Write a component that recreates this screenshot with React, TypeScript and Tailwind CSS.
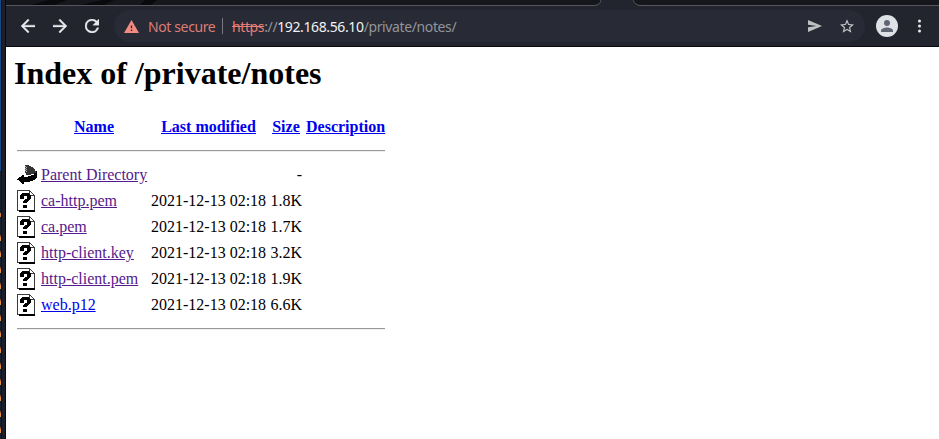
import React from "react";

const files = [
  { name: "ca-http.pem", size: "1.8K", visited: true },
  { name: "ca.pem", size: "1.7K", visited: true },
  { name: "http-client.key", size: "3.2K", visited: true },
  { name: "http-client.pem", size: "1.9K", visited: true },
  { name: "web.p12", size: "6.6K", visited: false },
];

const glowRows = Array.from({ length: 13 }, (_, i) => i);

function UnknownIcon() {
  return (
    <svg width="20" height="22" viewBox="0 0 20 22" shapeRendering="crispEdges" className="shrink-0">
      <path d="M0 0h13v1h1v1h1v1h1v1h1v1h1v16H0z" fill="#3c3c3c" />
      <path d="M1 1h11v5h5v14H1z" fill="#fff" />
      <path d="M13 2h1v1h1v1h1v1h-3z" fill="#fff" />
      <path d="M2 20h16v2H2z" fill="#000" />
      <path d="M5 3h7v1h1v1h1v4h-1v1h-1v1h-1v1h-1v1H6v-2h1v-1h1V9h2V6H7v3H3V5h1V4h1z M6 15h4v3H6z" fill="#000" />
    </svg>
  );
}

function BackIcon() {
  return (
    <svg width="20" height="22" viewBox="0 0 20 22" shapeRendering="crispEdges" className="shrink-0">
      <path d="M8 1h4v1h2v1h2v1h1v1h1v2h1v3h-5v1H9V9H8z" fill="#333" />
      <path d="M8 2h1v1H8zm0 2h1v1H8zm0 2h1v1H8zm1-3h1v1H9zm0 2h1v1H9zm0 2h1v1H9z" fill="#bbb" />
      <path d="M19 7h1v7h-1v1h-1v1h-2v1h-3v1H7v2H5v-1H4v-1H3v-1H2v-1H0v-1h1v-1h1v-1h2v-1h1v-1h2v2h4v-1h3v-1h3V9h2z" fill="#000" />
    </svg>
  );
}

function Toolbar() {
  return (
    <div className="relative h-[47px] bg-[#23252e] font-['Noto_Sans',sans-serif] text-[14px] tracking-[-0.38px]">
      <svg className="absolute left-0 top-0" width="933" height="7" fill="none">
        <path d="M0 0h596Q594 5 588 5H0z" fill="#16171c" />
        <path d="M25 5 43 0h18L48 5zM75 5 96 0h12L98 5zM134 5l5-5h12l-6 5z" fill="#090a0d" />
        <path d="M626 0Q629 5 635 5h298V0z" fill="#16171c" />
        <path d="M0 5.5h588q6 0 7-5.5M627 0q2 5.5 8 5.5h298" stroke="#55575b" />
      </svg>
      <div className="flex h-[47px] items-center border-b border-[#08090c] pt-[6px] text-[#e8eaed]">
        <svg className="ml-[15px] shrink-0" width="14" height="14" viewBox="4 4 16 16" fill="currentColor" stroke="currentColor" strokeWidth="0.4"><path d="M20 11H7.8l5.6-5.6L12 4l-8 8 8 8 1.4-1.4L7.8 13H20z" /></svg>
        <svg className="ml-[18px] shrink-0" width="14" height="14" viewBox="4 4 16 16" fill="currentColor" stroke="currentColor" strokeWidth="0.4"><path d="m12 4-1.4 1.4 5.6 5.6H4v2h12.2l-5.6 5.6L12 20l8-8z" /></svg>
        <svg className="ml-[18px] shrink-0" width="14" height="14" viewBox="4 4 16 16" fill="currentColor" stroke="currentColor" strokeWidth="0.4"><path d="M17.65 6.35A7.96 7.96 0 0 0 12 4a8 8 0 1 0 7.73 10h-2.08A6 6 0 1 1 12 6c1.66 0 3.14.69 4.22 1.78L13 11h7V4z" /></svg>
        <div className="ml-[15px] flex h-8 w-[751px] shrink-0 items-center rounded-full bg-[#282a35]">
          <svg className="ml-[10px] shrink-0" width="15" height="13" viewBox="1 2 22 19" fill="#f28b82"><path d="M1 21h22L12 2zm12-3h-2v-2h2zm0-4h-2v-4h2z" /></svg>
          <span className="ml-[9px] w-[68px] whitespace-nowrap text-[#dc7e77]">Not secure</span>
          <span className="ml-[6px] h-4 w-px bg-[#777982]" />
          <span className="ml-[9px] whitespace-nowrap text-[#92959b]"><span className="text-[#e77f77] line-through">https</span>://<span className="text-[#f1f3f4]">192.168.56.10</span>/private/notes/</span>
          <svg className="ml-auto mr-[18px] shrink-0" width="14" height="12" viewBox="2 3 21 18" fill="#bfc0c1"><path d="M2 21 23 12 2 3v7l13 2-13 2z" /></svg>
          <svg className="mr-[11px] shrink-0" width="14" height="14" viewBox="2 2 20 19" fill="#c5c6c7"><path d="m22 9.24-7.19-.62L12 2 9.19 8.63 2 9.24l5.46 4.73L5.82 21 12 17.27 18.18 21l-1.63-7.03zM12 15.4l-3.76 2.27 1-4.28-3.32-2.88 4.38-.38L12 6.1l1.71 4.04 4.38.38-3.32 2.88 1 4.28z" /></svg>
        </div>
        <svg className="ml-[11px] shrink-0" width="22" height="22" viewBox="0 0 22 22"><circle cx="11" cy="11" r="11" fill="#dee1e6" /><circle cx="11" cy="8" r="3" fill="#5f6573" /><path d="M5 17v-1.5c0-2 4-3 6-3s6 1 6 3V17z" fill="#5f6573" /></svg>
        <svg className="ml-[19px] shrink-0" width="4" height="14" fill="#e8eaed"><circle cx="2.5" cy="2" r="1.5" /><circle cx="2.5" cy="7" r="1.5" /><circle cx="2.5" cy="12" r="1.5" /></svg>
      </div>
    </div>
  );
}

export default function App() {
  return (
    <div className="flex h-[439px] w-[939px] overflow-hidden bg-white">
      <div className="flex w-[6px] shrink-0 border-r border-[#08090c] bg-[#1c1f29]">
        <div className="flex w-[2px] flex-col border-r border-[#11131b] bg-[#15202d]">
          <div className="h-[171px] w-px shrink-0 bg-[#164a85]" />
          <div className="mb-[18px] mt-[42px] h-[4px] w-px shrink-0 bg-[#d87a35]" />
          <div className="flex flex-col">
            {glowRows.map((i) => (
              <div key={i} className="mb-[10px] h-[6px] w-px shrink-0 border-t-2 border-[#8a4b2a] bg-[#e09040]" />
            ))}
          </div>
        </div>
      </div>
      <div className="min-w-0 flex-1">
        <Toolbar />
        <main className="pl-2 font-['Liberation_Serif',serif] text-[16px] leading-[18px] text-black">
          <h1 className="pt-[8px] text-[32px] font-bold leading-[37px]">Index of /private/notes</h1>
          <div className="ml-[3px] mt-[26px] w-[368px]">
            <div className="grid grid-cols-[24px_106px_4px_115px_4px_32px_4px_79px] whitespace-nowrap text-center font-bold text-[#0000ee] underline">
              <a className="col-start-2">Name</a>
              <a className="col-start-4">Last modified</a>
              <a className="col-start-6">Size</a>
              <a className="col-start-8">Description</a>
            </div>
            <div className="mt-[14px] h-[2px] border-b border-t border-b-[#eee] border-t-[#9a9a9a]" />
            <div className="mt-[12px] flex flex-col gap-1">
              <div className="grid h-[22px] grid-cols-[24px_110px_119px_32px] items-center whitespace-nowrap">
                <BackIcon />
                <a className="text-[#551a8b] underline">Parent Directory</a>
                <span className="col-start-4 text-right">-</span>
              </div>
              {files.map((file) => (
                <div key={file.name} className="grid h-[22px] grid-cols-[24px_110px_119px_32px] items-center whitespace-nowrap">
                  <UnknownIcon />
                  <a className={file.visited ? "text-[#551a8b] underline" : "text-[#0000ee] underline"}>{file.name}</a>
                  <span>2021-12-13 02:18</span>
                  <span className="text-right">{file.size}</span>
                </div>
              ))}
            </div>
            <div className="mt-[12px] h-[2px] border-b border-t border-b-[#eee] border-t-[#9a9a9a]" />
          </div>
        </main>
      </div>
    </div>
  );
}
